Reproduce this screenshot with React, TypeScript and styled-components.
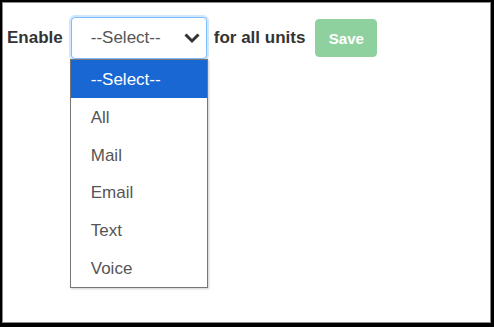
import styled, { createGlobalStyle } from 'styled-components';

const GlobalStyle = createGlobalStyle`
	html, body {
		margin: 0;
		padding: 0;
		background: #fff;
	}
	body {
		font-family: "Liberation Sans", Arial, sans-serif;
	}
`;

const options = ['--Select--', 'All', 'Mail', 'Email', 'Text', 'Voice'];

export default function App() {
	return (
		<>
			<GlobalStyle />
			<Frame>
				<Inner>
					<Row>
						<Label>Enable</Label>
						<SelectWrap>
							<SelectBox>
								<SelectText>--Select--</SelectText>
								<svg width="18" height="12" viewBox="0 0 18 12">
									<path
										d="M2.5 2.5 L9 9 L15.5 2.5"
										fill="none"
										stroke="#333"
										strokeWidth="3"
									/>
								</svg>
							</SelectBox>
							<OptionList>
								{options.map((o, i) => (
									<Option key={o} $active={i === 0}>
										{o}
									</Option>
								))}
							</OptionList>
						</SelectWrap>
						<Label>for all units</Label>
						<SaveButton type="button" disabled>
							Save
						</SaveButton>
					</Row>
				</Inner>
			</Frame>
		</>
	);
}

const Frame = styled.div`
	box-sizing: border-box;
	width: 494px;
	height: 327px;
	border-style: solid;
	border-color: #000;
	border-width: 2px 3px 4px 2px;
	background: #000;
`;

const Inner = styled.div`
	box-sizing: border-box;
	height: 100%;
	background: #fff;
	border: 1px solid #8a8a8a;
	padding: 14px 0 0 4px;
`;

const Row = styled.div`
	display: flex;
	align-items: flex-start;
	gap: 7px;
`;

const Label = styled.span`
	font-weight: bold;
	font-size: 17px;
	color: #333;
	line-height: 42px;
	margin-right: 1px;
`;

const SelectWrap = styled.div`
	position: relative;
	width: 136px;
	height: 42px;
`;

const SelectBox = styled.div`
	box-sizing: border-box;
	height: 42px;
	border: 1px solid #80bdff;
	border-radius: 4px;
	box-shadow: 0 0 0 2px rgba(0, 123, 255, 0.18);
	display: flex;
	align-items: center;
	justify-content: space-between;
	padding: 0 5px 0 19px;
	background: #fff;
`;

const SelectText = styled.span`
	font-size: 17px;
	color: #555;
`;

const OptionList = styled.div`
	position: absolute;
	top: 42px;
	left: -1px;
	width: 136px;
	border: 1px solid #767676;
	background: #fff;
	box-shadow: 1px 1px 2px rgba(0, 0, 0, 0.2);
`;

const Option = styled.div<{ $active: boolean }>`
	height: 37.8px;
	line-height: 39px;
	padding-left: 20px;
	font-size: 17px;
	color: ${(p) => (p.$active ? '#fff' : '#555')};
	background: ${(p) => (p.$active ? '#1967d2' : '#fff')};
`;

const SaveButton = styled.button`
	margin: 2px 0 0 2px;
	width: 62px;
	height: 38px;
	border: 1px solid #8fd19e;
	border-radius: 4px;
	background: #8fd19e;
	color: #fff;
	font-family: "Liberation Sans", Arial, sans-serif;
	font-weight: bold;
	font-size: 15px;
	padding: 0;
`;
